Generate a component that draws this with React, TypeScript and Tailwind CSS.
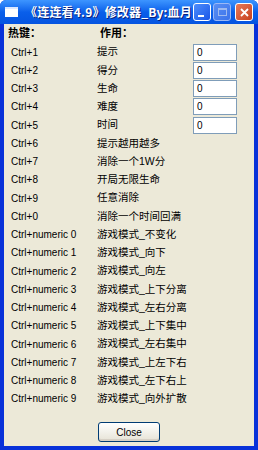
import React from "react";

const rows: { key: string; action: string; input?: boolean }[] = [
  { key: "Ctrl+1", action: "提示", input: true },
  { key: "Ctrl+2", action: "得分", input: true },
  { key: "Ctrl+3", action: "生命", input: true },
  { key: "Ctrl+4", action: "难度", input: true },
  { key: "Ctrl+5", action: "时间", input: true },
  { key: "Ctrl+6", action: "提示越用越多" },
  { key: "Ctrl+7", action: "消除一个1W分" },
  { key: "Ctrl+8", action: "开局无限生命" },
  { key: "Ctrl+9", action: "任意消除" },
  { key: "Ctrl+0", action: "消除一个时间回满" },
  { key: "Ctrl+numeric 0", action: "游戏模式_不变化" },
  { key: "Ctrl+numeric 1", action: "游戏模式_向下" },
  { key: "Ctrl+numeric 2", action: "游戏模式_向左" },
  { key: "Ctrl+numeric 3", action: "游戏模式_上下分离" },
  { key: "Ctrl+numeric 4", action: "游戏模式_左右分离" },
  { key: "Ctrl+numeric 5", action: "游戏模式_上下集中" },
  { key: "Ctrl+numeric 6", action: "游戏模式_左右集中" },
  { key: "Ctrl+numeric 7", action: "游戏模式_上左下右" },
  { key: "Ctrl+numeric 8", action: "游戏模式_左下右上" },
  { key: "Ctrl+numeric 9", action: "游戏模式_向外扩散" },
];

export default function App() {
  return (
    <div
      className="w-[258px] h-[450px] flex flex-col bg-[#0831d9] rounded-t-[6px] overflow-hidden"
      style={{ fontFamily: '"Liberation Sans", "Noto Sans CJK SC", sans-serif' }}
    >
      {/* title bar */}
      <div className="h-[24px] flex items-center bg-gradient-to-b from-[#3d95ff] via-[#0a5fea] to-[#0554e0] px-[5px]">
        <div className="w-[13px] h-[10px] bg-white border-t-2 border-[#dce8ff] shrink-0" />
        <div
          className="ml-[7px] text-[12px] font-bold text-white whitespace-nowrap tracking-[0.2px] [text-shadow:1px_1px_0_#0a1f7a]"
          style={{ fontFamily: '"Noto Sans CJK SC", sans-serif' }}
        >
          《连连看4.9》修改器_By:血月
        </div>
        <div className="ml-auto flex items-center gap-[2px]">
          <div className="w-[18px] h-[18px] rounded-[3px] border border-white bg-gradient-to-br from-[#4f8dfb] to-[#1a55e8] flex items-end pl-[4px] pb-[3px]">
            <div className="w-[6px] h-[2px] bg-white" />
          </div>
          <div className="w-[18px] h-[18px] rounded-[3px] border border-[#9bb8f5] bg-gradient-to-br from-[#5a8ef2] to-[#3a72eb] flex items-center justify-center">
            <div className="w-[9px] h-[8px] border border-[#9db9f0] border-t-2" />
          </div>
          <div className="ml-[2px] w-[18px] h-[18px] rounded-[3px] border border-white bg-gradient-to-br from-[#e7795a] to-[#c7401b] flex items-center justify-center">
            <svg width="9" height="9" viewBox="0 0 9 9">
              <path d="M1 1 L8 8 M8 1 L1 8" stroke="white" strokeWidth="1.8" />
            </svg>
          </div>
        </div>
      </div>

      {/* body */}
      <div className="flex-1 mx-[4px] mb-[4px] bg-[#ece9d8] flex flex-col text-[10px] text-black">
        <div className="h-[16px] flex items-center font-bold text-[11px] leading-none">
          <span className="w-[96px] pl-[4px]" style={{ fontFamily: '"Noto Sans CJK SC", sans-serif' }}>热键：</span>
          <span style={{ fontFamily: '"Noto Sans CJK SC", sans-serif' }}>作用：</span>
        </div>
        <div className="mt-[3px] grid auto-rows-[18.25px]">
          {rows.map((r) => (
            <div key={r.key} className="flex items-center">
              <span className="w-[93px] pl-[7px] whitespace-nowrap">{r.key}</span>
              <span className="w-[96px] whitespace-nowrap text-[10.5px]">{r.action}</span>
              {r.input && (
                <div className="w-[44px] h-[17px] bg-white border border-[#7f9db9] pl-[3px] flex items-center text-[10px]">
                  0
                </div>
              )}
            </div>
          ))}
        </div>
        <div className="mt-auto mb-[4px] flex justify-center">
          <div className="w-[62px] h-[20px] rounded-[3px] border border-[#003c74] bg-gradient-to-b from-white to-[#e6e3d6] flex items-center justify-center text-[10px] shadow-[inset_0_-2px_0_#d6d0c5]">
            Close
          </div>
        </div>
      </div>
    </div>
  );
}
